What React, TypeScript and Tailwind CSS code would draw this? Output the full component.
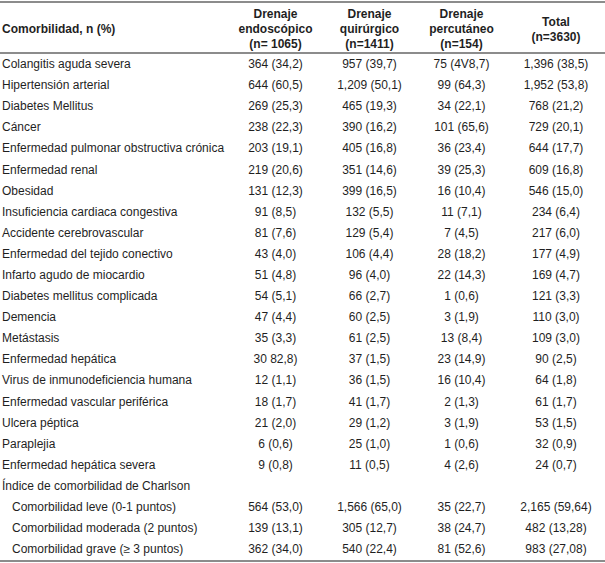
import React from "react"

type Row = {
  label: string
  values?: [string, string, string, string]
  indent?: boolean
}

const rows: Row[] = [
  { label: "Colangitis aguda severa", values: ["364 (34,2)", "957 (39,7)", "75 (4V8,7)", "1,396 (38,5)"] },
  { label: "Hipertensión arterial", values: ["644 (60,5)", "1,209 (50,1)", "99 (64,3)", "1,952 (53,8)"] },
  { label: "Diabetes Mellitus", values: ["269 (25,3)", "465 (19,3)", "34 (22,1)", "768 (21,2)"] },
  { label: "Cáncer", values: ["238 (22,3)", "390 (16,2)", "101 (65,6)", "729 (20,1)"] },
  { label: "Enfermedad pulmonar obstructiva crónica", values: ["203 (19,1)", "405 (16,8)", "36 (23,4)", "644 (17,7)"] },
  { label: "Enfermedad renal", values: ["219 (20,6)", "351 (14,6)", "39 (25,3)", "609 (16,8)"] },
  { label: "Obesidad", values: ["131 (12,3)", "399 (16,5)", "16 (10,4)", "546 (15,0)"] },
  { label: "Insuficiencia cardiaca congestiva", values: ["91 (8,5)", "132 (5,5)", "11 (7,1)", "234 (6,4)"] },
  { label: "Accidente cerebrovascular", values: ["81 (7,6)", "129 (5,4)", "7 (4,5)", "217 (6,0)"] },
  { label: "Enfermedad del tejido conectivo", values: ["43 (4,0)", "106 (4,4)", "28 (18,2)", "177 (4,9)"] },
  { label: "Infarto agudo de miocardio", values: ["51 (4,8)", "96 (4,0)", "22 (14,3)", "169 (4,7)"] },
  { label: "Diabetes mellitus complicada", values: ["54 (5,1)", "66 (2,7)", "1 (0,6)", "121 (3,3)"] },
  { label: "Demencia", values: ["47 (4,4)", "60 (2,5)", "3 (1,9)", "110 (3,0)"] },
  { label: "Metástasis", values: ["35 (3,3)", "61 (2,5)", "13 (8,4)", "109 (3,0)"] },
  { label: "Enfermedad hepática", values: ["30 82,8)", "37 (1,5)", "23 (14,9)", "90 (2,5)"] },
  { label: "Virus de inmunodeficiencia humana", values: ["12 (1,1)", "36 (1,5)", "16 (10,4)", "64 (1,8)"] },
  { label: "Enfermedad vascular periférica", values: ["18 (1,7)", "41 (1,7)", "2 (1,3)", "61 (1,7)"] },
  { label: "Ulcera péptica", values: ["21 (2,0)", "29 (1,2)", "3 (1,9)", "53 (1,5)"] },
  { label: "Paraplejia", values: ["6 (0,6)", "25 (1,0)", "1 (0,6)", "32 (0,9)"] },
  { label: "Enfermedad hepática severa", values: ["9 (0,8)", "11 (0,5)", "4 (2,6)", "24 (0,7)"] },
  { label: "Índice de comorbilidad de Charlson" },
  { label: "Comorbilidad leve (0-1 puntos)", indent: true, values: ["564 (53,0)", "1,566 (65,0)", "35 (22,7)", "2,165 (59,64)"] },
  { label: "Comorbilidad moderada (2 puntos)", indent: true, values: ["139 (13,1)", "305 (12,7)", "38 (24,7)", "482 (13,28)"] },
  { label: "Comorbilidad grave (≥ 3 puntos)", indent: true, values: ["362 (34,0)", "540 (22,4)", "81 (52,6)", "983 (27,08)"] },
]

const cols = "grid grid-cols-[228px_95px_93px_91px_98px]"

export default function App() {
  return (
    <div className="w-[605px] h-[563px] bg-white pt-[1px] text-[12px] text-[#1f1f1f] [font-family:'Liberation_Sans',Arial,sans-serif]">
      {/* header */}
      <div className={`${cols} border-y-2 border-[#8c8c8c] pt-[4px] font-bold leading-[15px]`}>
        <div className="self-center pl-[2px]">Comorbilidad, n (%)</div>
        <div className="text-center">
          Drenaje
          <br />
          endoscópico
          <br />
          (n= 1065)
        </div>
        <div className="text-center">
          Drenaje
          <br />
          quirúrgico
          <br />
          (n=1411)
        </div>
        <div className="text-center">
          Drenaje
          <br />
          percutáneo
          <br />
          (n=154)
        </div>
        <div className="self-center text-center">
          Total
          <br />
          (n=3630)
        </div>
      </div>

      {/* body */}
      <div className="border-b-2 border-[#8c8c8c]">
        {rows.map((row) => (
          <div key={row.label} className={`${cols} h-[21.1px] items-center leading-[21px]`}>
            <div className={row.indent ? "pl-[12px]" : "pl-[2px]"}>{row.label}</div>
            {row.values?.map((v, i) => (
              <div key={i} className="text-center">
                {v}
              </div>
            ))}
          </div>
        ))}
      </div>
    </div>
  )
}
